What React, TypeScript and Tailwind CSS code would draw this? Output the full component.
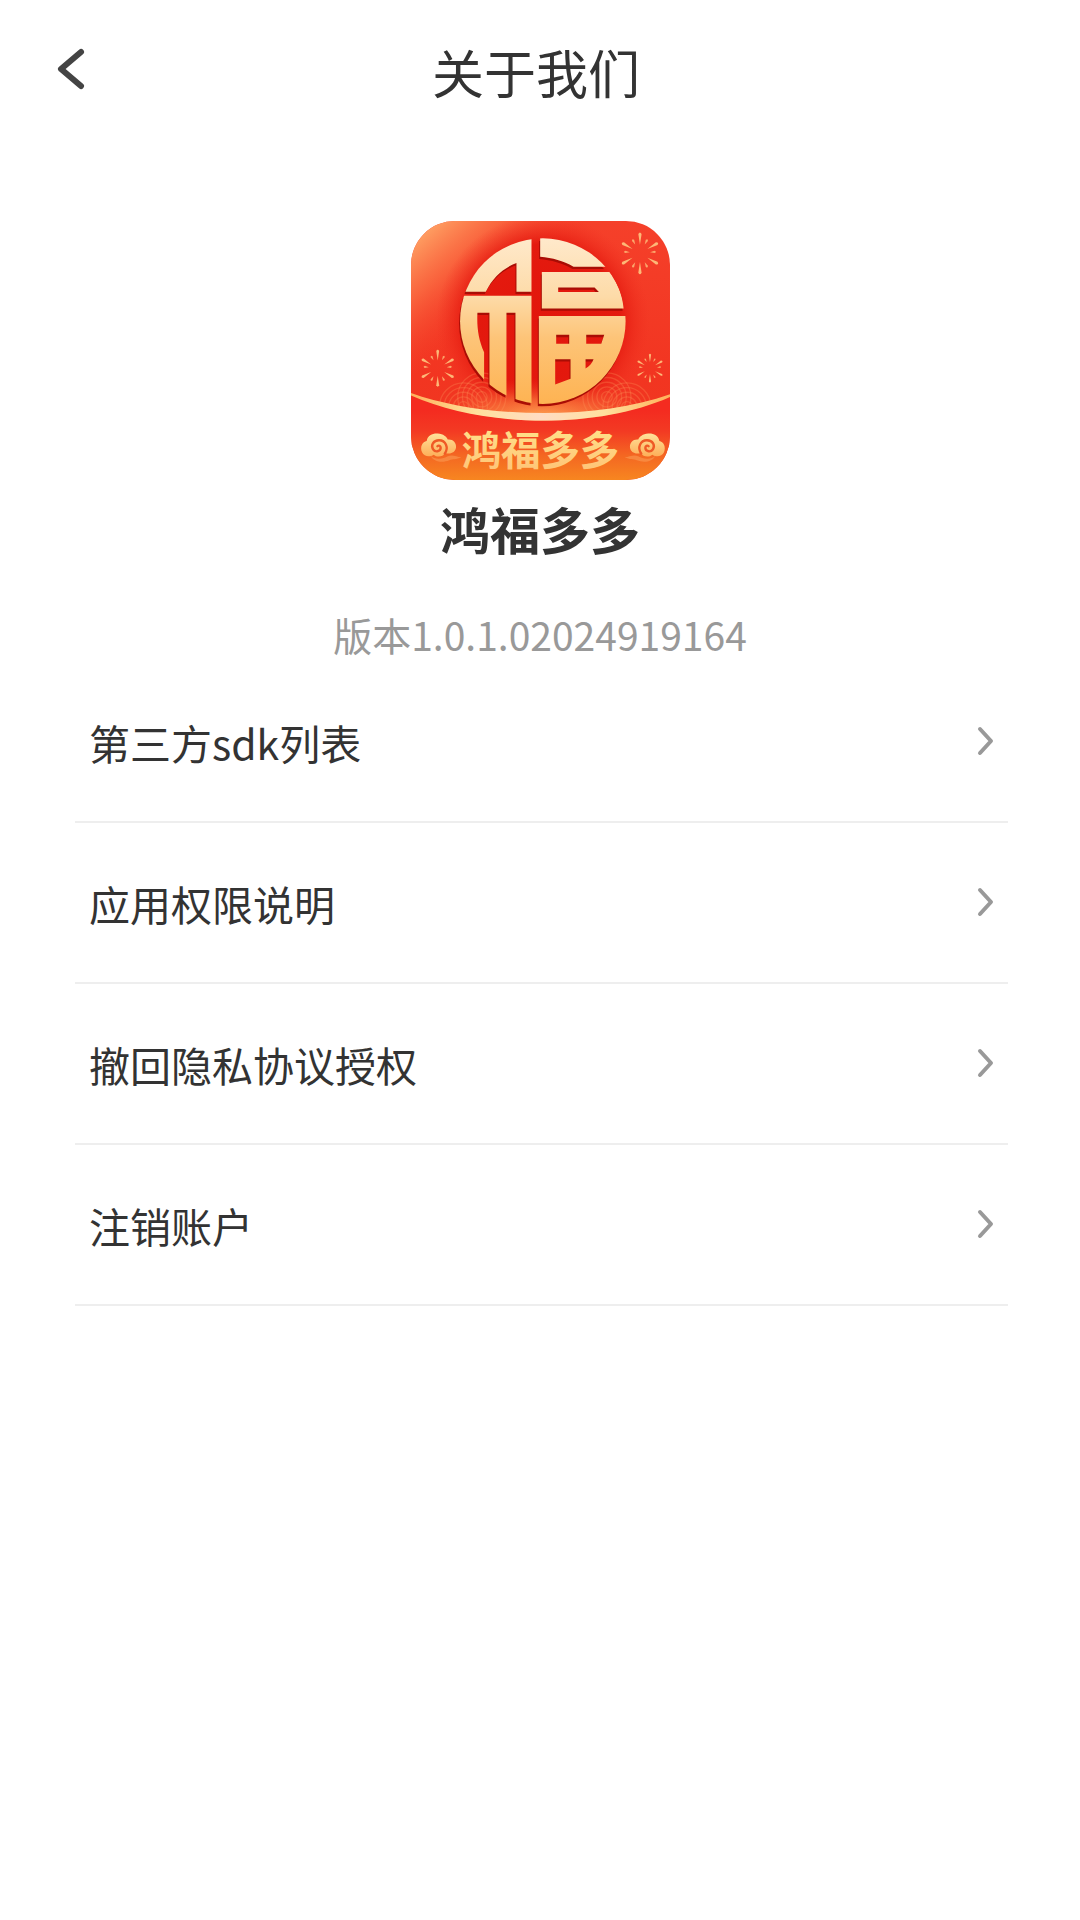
const items = [
   { id: 'sdk', label: '第三方sdk列表' },
   { id: 'permissions', label: '应用权限说明' },
   { id: 'privacy', label: '撤回隐私协议授权' },
   { id: 'delete-account', label: '注销账户' },
];

const longRays = [0, 60, 120, 180, 240, 300];
const shortRays = [28, 84, 152, 208, 276, 332];

function Firework({ x, y, r }: { x: number; y: number; r: number }) {
   return (
      <g transform={`translate(${x} ${y})`} fill="#fdb877">
         {longRays.map((angle) => (
            <path
               key={angle}
               transform={`rotate(${angle})`}
               d={`M0 ${-r * 0.42} L${-r * 0.08} ${-r * 0.95} Q0 ${-r * 1.1} ${r * 0.08} ${-r * 0.95} Z`}
            />
         ))}
         {shortRays.map((angle) => (
            <path
               key={angle}
               transform={`rotate(${angle})`}
               opacity="0.85"
               d={`M0 ${-r * 0.5} L${-r * 0.06} ${-r * 0.72} Q0 ${-r * 0.85} ${r * 0.06} ${-r * 0.72} Z`}
            />
         ))}
      </g>
   );
}

function Ripples({ x, y }: { x: number; y: number }) {
   return (
      <g fill="none" stroke="#ff9a5c" strokeWidth="4" opacity="0.28">
         {[16, 30, 44, 58, 72].map((r) => (
            <circle key={r} cx={x} cy={y} r={r} />
         ))}
      </g>
   );
}

function Cloud() {
   return (
      <>
         <path
            d="M66 726 C59 708 68 694 80 692 C83 675 98 669 113 670 C130 671 140 680 143 688 C158 686 169 697 168 711 C166 727 151 733 136 728 C128 740 111 742 101 733 C88 742 72 738 66 726 Z"
            fill="url(#cloud)"
         />
         <path
            d="M134 730 C147 712 137 690 117 690 C99 690 92 706 99 717 C106 727 121 724 122 713 C122 707 116 704 112 708"
            fill="none"
            stroke="#ef5a26"
            strokeWidth="7"
            strokeLinecap="round"
         />
         <path
            d="M92 737 C108 750 130 745 143 738 C157 731 170 740 184 741 C168 748 158 746 148 750 C126 759 100 754 92 737 Z"
            fill="#fba35b"
            opacity="0.5"
         />
      </>
   );
}

function AppLogo() {
   return (
      <svg viewBox="33 33 776 776" className="size-[259px]" role="img" aria-label="鸿福多多">
         <defs>
            <clipPath id="tile">
               <rect x="33" y="33" width="776" height="776" rx="132" />
            </clipPath>
            <clipPath id="disc">
               <circle cx="428" cy="333" r="248" />
            </clipPath>
            <linearGradient id="sky" x1="0" y1="0" x2="0" y2="1">
               <stop offset="0" stopColor="#f5402a" />
               <stop offset="0.6" stopColor="#f23521" />
               <stop offset="1" stopColor="#ee3a1f" />
            </linearGradient>
            <linearGradient id="corner" gradientUnits="userSpaceOnUse" x1="60" y1="60" x2="270" y2="300">
               <stop offset="0" stopColor="#ffa566" />
               <stop offset="0.45" stopColor="#fb7044" stopOpacity="0.75" />
               <stop offset="1" stopColor="#f5402a" stopOpacity="0" />
            </linearGradient>
            <radialGradient id="shade" gradientUnits="userSpaceOnUse" cx="428" cy="333" r="320">
               <stop offset="0" stopColor="#e2160c" />
               <stop offset="0.72" stopColor="#e2160c" stopOpacity="0.9" />
               <stop offset="1" stopColor="#f03020" stopOpacity="0" />
            </radialGradient>
            <radialGradient
               id="glow"
               gradientUnits="userSpaceOnUse"
               cx="0"
               cy="0"
               r="1"
               gradientTransform="translate(425 625) scale(350 120)"
            >
               <stop offset="0" stopColor="#ffab55" />
               <stop offset="0.5" stopColor="#fb8440" stopOpacity="0.6" />
               <stop offset="1" stopColor="#f5402a" stopOpacity="0" />
            </radialGradient>
            <linearGradient id="ground" gradientUnits="userSpaceOnUse" x1="0" y1="600" x2="0" y2="809">
               <stop offset="0" stopColor="#f42b20" />
               <stop offset="0.3" stopColor="#f33a23" />
               <stop offset="0.65" stopColor="#f46722" />
               <stop offset="1" stopColor="#f78620" />
            </linearGradient>
            <linearGradient id="rim" x1="0" y1="0" x2="1" y2="0">
               <stop offset="0" stopColor="#ffb05a" />
               <stop offset="0.25" stopColor="#ffe09c" />
               <stop offset="0.5" stopColor="#ffdcc4" />
               <stop offset="0.75" stopColor="#ffe09c" />
               <stop offset="1" stopColor="#ffb05a" />
            </linearGradient>
            <linearGradient id="gold" gradientUnits="userSpaceOnUse" x1="0" y1="85" x2="0" y2="582">
               <stop offset="0" stopColor="#ffe9cb" />
               <stop offset="0.35" stopColor="#fddba8" />
               <stop offset="0.6" stopColor="#fdc478" />
               <stop offset="1" stopColor="#feb352" />
            </linearGradient>
            <linearGradient id="cloud" x1="0" y1="0" x2="0" y2="1">
               <stop offset="0" stopColor="#ffe29a" />
               <stop offset="1" stopColor="#fdae58" />
            </linearGradient>
            <linearGradient id="caption" x1="0" y1="0" x2="0" y2="1">
               <stop offset="0.2" stopColor="#ffdf88" />
               <stop offset="1" stopColor="#fec175" />
            </linearGradient>
            {/* The solid parts of the emblem, cut to a disc */}
            <g id="emblem" clipPath="url(#disc)">
               <path d="M180 245 V80 H394 V245 H349 V159 C310 174 279 201 257 245 Z" />
               <path d="M170 257 H394 V590 H346 V308 H319 V590 H268 V308 H232 C230 352 235 388 252 426 V590 H170 Z" />
               <path d="M420 80 H640 V170 H520 C488 151 458 144 420 140 Z" />
               <path
                  fillRule="evenodd"
                  d="M425 186 H629 C650 216 666 252 670 295 H425 Z M474 232 H583 L596 246 H474 Z"
               />
               <path
                  fillRule="evenodd"
                  d="M416 318 H690 V590 H416 Z M468 374 H507 V401 H468 Z M558 374 H612 L603 401 H558 Z M465 447 H511 V506 L465 523 Z M556 447 H580 C575 460 567 468 556 475 Z"
               />
            </g>
         </defs>

         <g clipPath="url(#tile)">
            <rect x="33" y="33" width="776" height="776" fill="url(#sky)" />
            <rect x="33" y="33" width="776" height="776" fill="url(#corner)" />
            <rect x="33" y="33" width="776" height="776" fill="url(#shade)" />
            <rect x="33" y="460" width="776" height="180" fill="url(#glow)" />
            <Ripples x={190} y={590} />
            <Ripples x={245} y={560} />
            <Ripples x={620} y={560} />
            <Ripples x={680} y={590} />

            {/* Curved horizon */}
            <path d="M33 552 C250 652 590 662 809 556 V809 H33 Z" fill="url(#ground)" />
            <path d="M33 548 C250 626 590 630 809 552 V560 C590 657 250 653 33 556 Z" fill="url(#rim)" />

            <Firework x={719} y={130} r={61} />
            <Firework x={113} y={474} r={54} />
            <Firework x={749} y={474} r={42} />

            <use href="#emblem" x="-3" y="7" fill="#a90d05" />
            <use href="#emblem" fill="url(#gold)" />

            <Cloud />
            <g transform="translate(857 0) scale(-1 1)">
               <Cloud />
            </g>
            <text
               x="421"
               y="765"
               textAnchor="middle"
               fill="url(#caption)"
               className="font-['Noto_Sans_CJK_SC',sans-serif] text-[118px] font-bold"
            >
               鸿福多多
            </text>
         </g>
      </svg>
   );
}

export default function AboutPage() {
   return (
      <div className="min-h-screen bg-white font-['Noto_Sans_CJK_SC',sans-serif] text-[#333333]">
         <header className="grid h-36 grid-cols-[120px_1fr_128px] items-center">
            <button type="button" aria-label="返回" className="flex h-[138px] items-center self-start pl-14">
               <svg viewBox="0 0 30 44" className="h-11 w-[30px]" fill="none" stroke="#444444" strokeWidth="6">
                  <path d="M25 5 L5 22 L25 39" strokeLinecap="round" strokeLinejoin="round" />
               </svg>
            </button>
            <h1 className="text-center text-[52px] leading-[76px]">关于我们</h1>
         </header>

         <main>
            <section className="flex flex-col items-center pt-[77px]">
               <AppLogo />
               <h2 className="mt-3 text-[50px] leading-[72px] font-bold">鸿福多多</h2>
               <p className="mt-[42px] text-[39px] leading-[56px] text-[#999999]">版本1.0.1.02024919164</p>
            </section>

            <nav className="ml-[75px] mr-[72px]">
               {items.map((item) => (
                  <a
                     key={item.id}
                     href={`#${item.id}`}
                     className="flex h-[161px] items-center justify-between border-b-2 border-[#eeeeee] px-3.5"
                  >
                     <span className="text-[41px] leading-[60px]">{item.label}</span>
                     <svg viewBox="0 0 18 32" className="h-8 w-[18px]" fill="none" stroke="#999999" strokeWidth="4">
                        <path d="M4 3 L15 15 L4 27" strokeLinecap="round" strokeLinejoin="round" />
                     </svg>
                  </a>
               ))}
            </nav>
         </main>
      </div>
   );
}
